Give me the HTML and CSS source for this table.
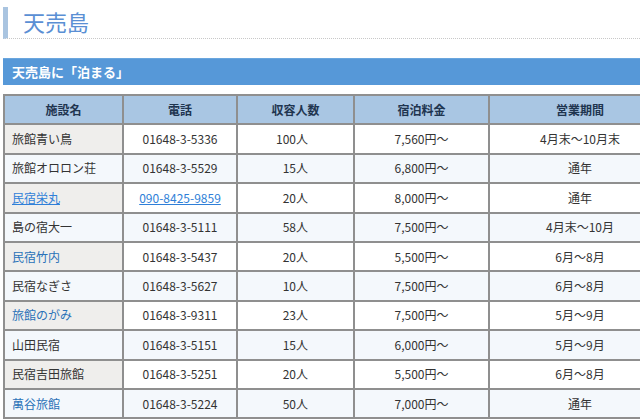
FILE: index.html
```html
<!DOCTYPE html>
<html lang="ja">
<head>
<meta charset="utf-8">
<link rel="stylesheet" href="styles.css">
</head>
<body>
<div class="page">
  <h1 class="title"><span class="title-text">天売島</span></h1>
  <h2 class="band">天売島に「泊まる」</h2>
  <div class="table-clip">
  <table class="inns">
    <thead>
      <tr>
        <th class="c1">施設名</th>
        <th class="c2">電話</th>
        <th class="c3">収容人数</th>
        <th class="c4">宿泊料金</th>
        <th class="c5">営業期間</th>
      </tr>
    </thead>
    <tbody>
      <tr><td class="name">旅館青い鳥</td><td class="tel">01648-3-5336</td><td class="cap">100人</td><td class="price">7,560円～</td><td class="period">4月末～10月末</td></tr>
      <tr><td class="name">旅館オロロン荘</td><td class="tel">01648-3-5529</td><td class="cap">15人</td><td class="price">6,800円～</td><td class="period">通年</td></tr>
      <tr><td class="name"><a class="link ul" href="#">民宿栄丸</a></td><td class="tel"><a class="link ul" href="#">090-8425-9859</a></td><td class="cap">20人</td><td class="price">8,000円～</td><td class="period">通年</td></tr>
      <tr><td class="name">島の宿大一</td><td class="tel">01648-3-5111</td><td class="cap">58人</td><td class="price">7,500円～</td><td class="period">4月末～10月</td></tr>
      <tr><td class="name"><a class="link" href="#">民宿竹内</a></td><td class="tel">01648-3-5437</td><td class="cap">20人</td><td class="price">5,500円～</td><td class="period">6月～8月</td></tr>
      <tr><td class="name">民宿なぎさ</td><td class="tel">01648-3-5627</td><td class="cap">10人</td><td class="price">7,500円～</td><td class="period">6月～8月</td></tr>
      <tr><td class="name"><a class="link" href="#">旅館のがみ</a></td><td class="tel">01648-3-9311</td><td class="cap">23人</td><td class="price">7,500円～</td><td class="period">5月～9月</td></tr>
      <tr><td class="name">山田民宿</td><td class="tel">01648-3-5151</td><td class="cap">15人</td><td class="price">6,000円～</td><td class="period">5月～9月</td></tr>
      <tr><td class="name">民宿吉田旅館</td><td class="tel">01648-3-5251</td><td class="cap">20人</td><td class="price">5,500円～</td><td class="period">6月～8月</td></tr>
      <tr><td class="name"><a class="link" href="#">萬谷旅館</a></td><td class="tel">01648-3-5224</td><td class="cap">50人</td><td class="price">7,000円～</td><td class="period">通年</td></tr>
    </tbody>
  </table>
  </div>
</div>
</body>
</html>
```

FILE: styles.css
```css
html, body {
  margin: 0;
  padding: 0;
  background: #ffffff;
  overflow: hidden;
}
body {
  font-family: "Noto Sans CJK JP", "Noto Sans", sans-serif;
  color: #333333;
  font-size: 12px;
}
.page {
  width: 637px;
  padding: 7px 0 0 3px;
  overflow: hidden;
}
.title {
  margin: 0;
  height: 31px;
  border-left: 5px solid #a9c4e0;
  border-bottom: 1px dotted #c8c8c8;
  padding-left: 15px;
  font-weight: normal;
  font-size: 22px;
  line-height: 29px;
  color: #5a8fd4;
}
.band {
  margin: 19px 0 0 0;
  height: 26px;
  background: #5698d8;
  border-top: 1px solid #6aa6de;
  color: #ffffff;
  font-size: 13px;
  font-weight: bold;
  line-height: 26px;
  padding-left: 9px;
}
.table-clip {
  width: 637px;
  overflow: hidden;
  margin-top: 9px;
}
.inns {
  border-collapse: collapse;
  table-layout: fixed;
  width: 668px;
}
.inns th, .inns td {
  border: 2px solid #8f8f8f;
  height: 27.4px;
  padding: 0;
  line-height: 16px;
}
.inns th {
  background: #a9c6e3;
  color: #1f3550;
  font-weight: bold;
  font-size: 12px;
  text-align: center;
}
.c1 { width: 117px; }
.c2 { width: 112px; }
.c3 { width: 115px; }
.c4 { width: 133px; }
.c5 { width: 180px; }
.inns td { background: #ffffff; }
.inns tbody tr:nth-child(even) td { background: #f4f8fc; }
.inns tbody td.name { background: #efeeec; text-align: left; padding-left: 7px; }
.inns td.tel, .inns td.price, .inns td.period { text-align: center; }
.inns td.cap { text-align: right; padding-right: 45px; }
.link { color: #2a72b8; text-decoration: none; }
.link.ul { color: #2f7fd8; text-decoration: underline; }
```
